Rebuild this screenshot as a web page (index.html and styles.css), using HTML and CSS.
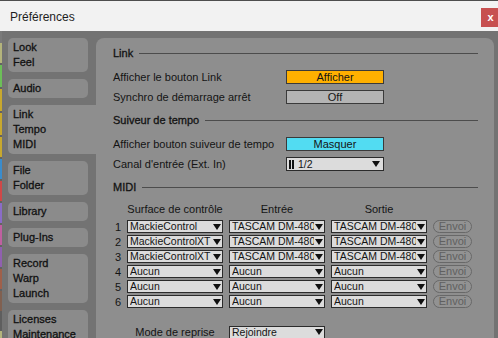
FILE: index.html
```html
<!DOCTYPE html>
<html lang="fr">
<head>
<meta charset="UTF-8">
<title>Préférences</title>
<link rel="stylesheet" href="styles.css">
</head>
<body>

<div class="window">
  <div class="titlebar">
    <span class="title">Préférences</span>
    <span class="close">x</span>
  </div>

  <div class="main">
    <div class="edge"></div>

    <nav class="tabs">
      <div class="tab">Look<br>Feel</div>
      <div class="tab">Audio</div>
      <div class="tab active">Link<br>Tempo<br>MIDI</div>
      <div class="tab">File<br>Folder</div>
      <div class="tab">Library</div>
      <div class="tab">Plug-Ins</div>
      <div class="tab">Record<br>Warp<br>Launch</div>
      <div class="tab">Licenses<br>Maintenance</div>
    </nav>

    <div class="panel">
      <div class="heading first"><span>Link</span></div>
      <div class="row">
        <span class="label">Afficher le bouton Link</span>
        <span class="toggle orange">Afficher</span>
      </div>
      <div class="row">
        <span class="label">Synchro de démarrage arrêt</span>
        <span class="toggle">Off</span>
      </div>

      <div class="heading"><span>Suiveur de tempo</span></div>
      <div class="row">
        <span class="label">Afficher bouton suiveur de tempo</span>
        <span class="toggle cyan">Masquer</span>
      </div>
      <div class="row">
        <span class="label">Canal d'entrée (Ext. In)</span>
        <span class="select wide"><span class="value"><i class="stereo"></i>1/2</span><b class="arrow"></b></span>
      </div>

      <div class="heading"><span>MIDI</span></div>
      <div class="midi">
        <span></span>
        <span class="colhead">Surface de contrôle</span>
        <span class="colhead">Entrée</span>
        <span class="colhead">Sortie</span>
        <span></span>
      </div>
      <div class="midi rows" id="midiRows"></div>

      <div class="midi mode">
        <span></span>
        <span class="colhead">Mode de reprise</span>
        <span class="select"><span class="value">Rejoindre</span><b class="arrow"></b></span>
      </div>
    </div>
  </div>
</div>

<script>
const surfaces = [
  ['MackieControl', 'TASCAM DM-4800', 'TASCAM DM-4800'],
  ['MackieControlXT', 'TASCAM DM-4800', 'TASCAM DM-4800'],
  ['MackieControlXT', 'TASCAM DM-4800', 'TASCAM DM-4800'],
  ['Aucun', 'Aucun', 'Aucun'],
  ['Aucun', 'Aucun', 'Aucun'],
  ['Aucun', 'Aucun', 'Aucun']
];

const rows = document.getElementById('midiRows');
surfaces.forEach(function(s, i) {
  let html = `<span class="num">${i + 1}</span>`;
  s.forEach(function(v) {
    html += `<span class="select"><span class="value">${v}</span><b class="arrow"></b></span>`;
  });
  html += '<span class="send">Envoi</span>';
  rows.insertAdjacentHTML('beforeend', html);
});
</script>
</body>
</html>
```

FILE: styles.css
```css
body {
  margin: 0;
  background-color: #737373;
  font-family: 'Liberation Sans', Arial, sans-serif;
  font-size: 11px;
  color: #141414;
  overflow: hidden;
}
.window {
  width: 498px;
  height: 338px;
  display: flex;
  flex-direction: column;
}
.titlebar {
  height: 30px;
  flex: none;
  border-top: 1px solid #4e4e4e;
  background-color: #f2f2f2;
  display: flex;
  align-items: flex-start;
  justify-content: space-between;
}
.title {
  font-size: 12px;
  color: #1e1e1e;
  padding: 9px 0 0 10px;
}
.close {
  margin-top: 7px;
  width: 17px;
  height: 19px;
  background-color: #c75050;
  color: #fff;
  font-weight: bold;
  font-size: 11px;
  line-height: 18px;
  text-align: center;
  padding-left: 2px;
  box-sizing: border-box;
}
.main {
  flex: 1;
  display: flex;
  overflow: hidden;
}
.edge {
  width: 2px;
  flex: none;
  background: linear-gradient(#7a7a7a 0 12px, #b4b47c 12px 32px, #626262 32px 34px,
    #6cbf58 34px 56px, #626262 56px 58px, #c8a82e 58px 80px, #626262 80px 82px,
    #c8a82e 82px 104px, #626262 104px 106px, #c8a82e 106px 126px, #626262 126px 128px,
    #3a8ccc 128px 148px, #626262 148px 150px, #d04848 150px 170px, #626262 170px 172px,
    #8a6cc8 172px 192px, #626262 192px 194px, #c060a0 194px 214px, #626262 214px 216px,
    #9060b0 216px 236px, #626262 236px 238px, #a0604a 238px 258px, #626262 258px 260px,
    #806050 260px 280px, #5e5e5e 280px 300px, #b4b47c 300px 318px, #6cbf58 318px);
}
.tabs {
  width: 80px;
  flex: none;
  padding: 7px 0 0 6px;
  display: flex;
  flex-direction: column;
  gap: 7px;
}
.tab {
  background-color: #8b8b8b;
  border-radius: 5px;
  padding: 2px 5px;
  line-height: 15px;
  color: #111;
  -webkit-text-stroke: 0.3px #111;
}
.tab.active {
  background-color: #8e8e8e;
  margin-right: -8px;
  border-radius: 5px 0 0 5px;
}
.panel {
  flex: 1;
  margin: 7px 4px 0 8px;
  padding: 8px 16px 0 17px;
  background-color: #8e8e8e;
  border-radius: 8px 8px 0 0;
}
.heading {
  height: 14px;
  margin-top: 6px;
  display: flex;
  align-items: center;
  gap: 6px;
  -webkit-text-stroke: 0.3px #111;
}
.heading.first {
  margin-top: 0;
}
.heading::after {
  content: "";
  flex: 1;
  height: 1px;
  background-color: #4c4c4c;
}
.heading + .row {
  margin-top: 7px;
}
.row {
  height: 20px;
  display: flex;
  align-items: center;
}
.label {
  width: 173px;
  flex: none;
}
.toggle {
  width: 98px;
  height: 14px;
  box-sizing: border-box;
  border: 1px solid #3a3a3a;
  background-color: #b4b4b4;
  text-align: center;
  line-height: 12px;
}
.toggle.orange {
  background-color: #ffb000;
}
.toggle.cyan {
  background-color: #52dcf2;
}
.select {
  height: 13px;
  box-sizing: border-box;
  border: 1px solid #2b2b2b;
  background-color: #dcdcdc;
  display: flex;
  align-items: center;
  padding: 0 1px 0 2px;
  overflow: hidden;
  font-size: 10.5px;
  line-height: 11px;
}
.select.wide {
  width: 98px;
  height: 14px;
  padding-right: 3px;
}
.value {
  flex: 1;
  white-space: nowrap;
  overflow: hidden;
  display: flex;
  align-items: center;
}
.arrow {
  flex: none;
  width: 0;
  height: 0;
  border-left: 4px solid transparent;
  border-right: 4px solid transparent;
  border-top: 6px solid #111;
  margin-left: 1px;
}
.stereo {
  width: 1px;
  height: 9px;
  border-left: 2px solid #111;
  border-right: 2px solid #111;
  margin-right: 4px;
}
.midi {
  display: grid;
  grid-template-columns: 8px 96px 96px 96px 39px;
  column-gap: 6px;
  margin-top: 8px;
  align-items: center;
}
.midi.rows {
  margin-top: 3px;
  grid-auto-rows: 15px;
}
.colhead {
  text-align: center;
  height: 14px;
  line-height: 14px;
}
.num {
  padding-left: 2px;
}
.send {
  height: 13px;
  box-sizing: border-box;
  border: 1px solid #686868;
  border-radius: 7px;
  background-color: #929292;
  color: #606060;
  text-align: center;
  line-height: 11px;
}
.midi.mode {
  margin-top: 16px;
}
```
